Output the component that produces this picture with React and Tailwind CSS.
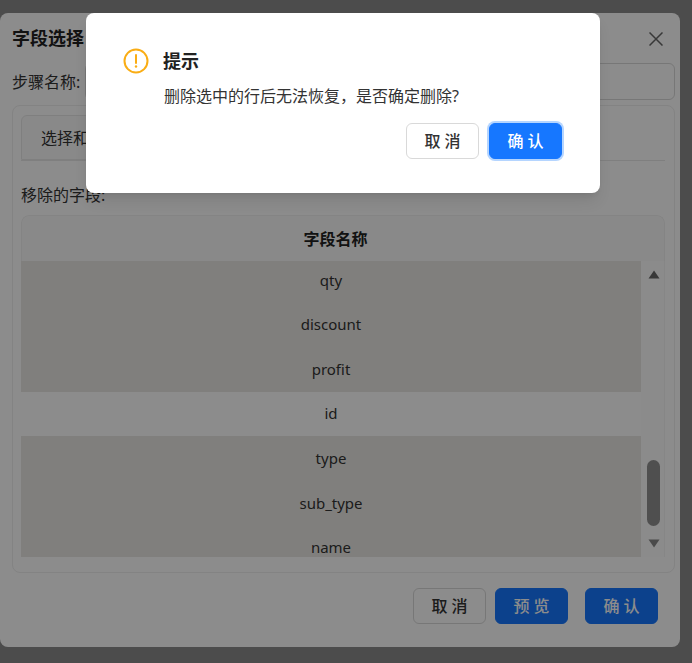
import React from "react";

const font = { fontFamily: '"Noto Sans","Noto Sans CJK SC",sans-serif' };
const rows = [
  { t: "qty", s: true },
  { t: "discount", s: true },
  { t: "profit", s: true },
  { t: "id", s: false },
  { t: "type", s: true },
  { t: "sub_type", s: true },
  { t: "name", s: true },
];

function Btn({ children, primary, className = "" }) {
  return (
    <button
      className={
        "w-[73px] h-9 rounded-md text-base font-medium border whitespace-pre " +
        (primary
          ? "bg-[#1677ff] border-[#1677ff] text-white "
          : "bg-white border-[#d9d9d9] text-[#333333] ") +
        className
      }
    >
      {children}
    </button>
  );
}

export default function App() {
  return (
    <div
      className="relative w-[692px] h-[663px] overflow-hidden bg-[#8a8a8a] pt-[13px] text-[#333333]"
      style={font}
    >
      <div className="w-[680px] h-[634px] bg-white rounded-lg pl-3 pr-[5px] flex flex-col">
        <div className="flex items-center justify-between h-[50px]">
          <span className="text-lg font-bold text-[#222222]">字段选择</span>
          <svg width="14" height="14" viewBox="0 0 14 14" className="text-[#666666] mr-[12px] mt-[2px]">
            <path d="M0.5 0.5L13.5 13.5M13.5 0.5L0.5 13.5" stroke="currentColor" strokeWidth="1.5" fill="none" />
          </svg>
        </div>
        <div className="flex items-center h-[37px] text-base">
          <span className="w-[73px] shrink-0 whitespace-nowrap">步骤名称:</span>
          <div className="flex-1 h-full border border-[#d9d9d9] rounded-md bg-white" />
        </div>
        <div className="mt-[5px] h-[468px] border border-[#eeeeee] rounded-lg pl-[8px] pr-[9px] pt-[9px]">
          <div className="h-[46px] border-b border-[#e8e8e8] flex">
            <div className="w-[200px] h-full border border-[#e8e8e8] rounded-t-md bg-[#fafafa] pl-[19px] flex items-center text-base">
              选择和排序字段
            </div>
          </div>
          <div className="mt-[24px] text-base leading-5">移除的字段:</div>
          <div className="mt-[10px] rounded-t-lg overflow-hidden">
            <div className="h-[46px] bg-[#fafafa] border-t border-x border-[#f0f0f0] rounded-t-lg pr-[15px] flex items-center justify-center text-base font-bold text-[#222222]">
              字段名称
            </div>
            <div className="h-[296px] flex overflow-hidden">
              <div className="w-[620px] shrink-0 overflow-hidden">
                <div className="-mt-[3px]">
                  {rows.map((r) => (
                    <div
                      key={r.t}
                      className={
                        "h-[44.6px] pb-[1px] flex items-center justify-center text-[15px] " +
                        (r.s ? "bg-[#eae8e3]" : "bg-white")
                      }
                    >
                      {r.t}
                    </div>
                  ))}
                </div>
              </div>
              <div className="flex-1 flex flex-col items-center bg-[#fdfdfd] border-r border-[#f5f5f5] pt-[9px] pb-[9px] pl-[2px]">
                <svg width="12" height="9" viewBox="0 0 12 9" className="text-[#666666]">
                  <path d="M6 0.5L11.5 8.5H0.5Z" fill="currentColor" />
                </svg>
                <div className="mt-auto w-[13px] h-[66px] rounded-full bg-[#919191]" />
                <svg width="12" height="9" viewBox="0 0 12 9" className="text-[#888888] mt-[13px]">
                  <path d="M6 8.5L11.5 0.5H0.5Z" fill="currentColor" />
                </svg>
              </div>
            </div>
          </div>
        </div>
        <div className="flex justify-end mt-[15px] pr-[17px]">
          <Btn>取 消</Btn>
          <Btn primary className="ml-[9px]">预 览</Btn>
          <Btn primary className="ml-[17px]">确 认</Btn>
        </div>
      </div>

      <div className="absolute inset-0 bg-black/45" />

      <div className="absolute left-[86px] top-[13px] w-[514px] h-[180px] bg-white rounded-lg shadow-lg px-[38px] pt-[35px]">
        <div className="flex items-center gap-[14px]">
          <svg width="26" height="26" viewBox="0 0 26 26" className="-ml-[1px]">
            <circle cx="13" cy="13" r="11.5" fill="none" stroke="#faad14" strokeWidth="2" />
            <path d="M13 7V15" stroke="#faad14" strokeWidth="2" strokeLinecap="round" />
            <circle cx="13" cy="18.5" r="1.2" fill="#faad14" />
          </svg>
          <span className="text-lg font-bold text-[#222222] leading-[26px]">提示</span>
        </div>
        <div className="ml-[40px] mt-[12px] text-base leading-5 text-[#333333] whitespace-nowrap">
          {"删除选中的行后无法恢复\uFF0C是否确定删除?"}
        </div>
        <div className="flex justify-end gap-[10px] mt-[17px]">
          <Btn>取 消</Btn>
          <Btn primary className="ring-2 ring-[#b5d5ff]">确 认</Btn>
        </div>
      </div>
    </div>
  );
}
